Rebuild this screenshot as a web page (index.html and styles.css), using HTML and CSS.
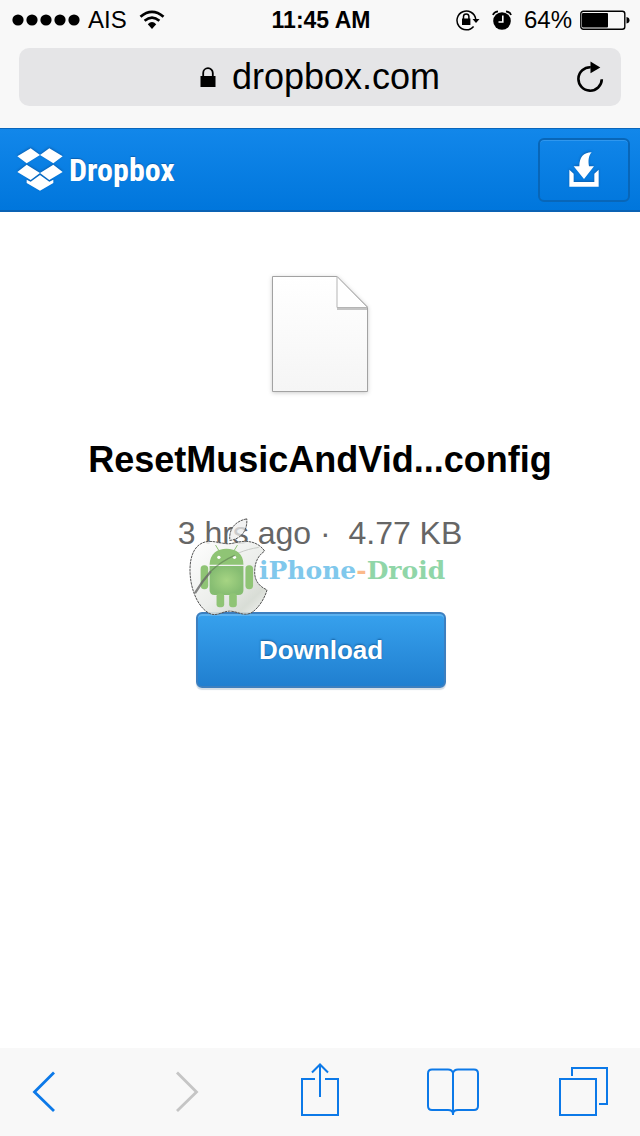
FILE: index.html
```html
<!DOCTYPE html>
<html lang="en">
<head>
  <meta charset="UTF-8">
  <meta name="viewport" content="width=device-width, initial-scale=1.0">
  <title>Dropbox - ResetMusicAndVid...config</title>
  <link rel="stylesheet" href="styles.css">
</head>
<body>

  <div class="browser-top">
    <div class="status-bar">
      <div class="status-left">
        <svg width="68" height="12" viewBox="0 0 68 12">
          <circle cx="6" cy="6" r="5.6"/>
          <circle cx="20" cy="6" r="5.6"/>
          <circle cx="34" cy="6" r="5.6"/>
          <circle cx="48" cy="6" r="5.6"/>
          <circle cx="62" cy="6" r="5.6"/>
        </svg>
        <span class="carrier">AIS</span>
        <svg width="26" height="20" viewBox="0 0 26 20">
          <path d="M1.5 6.7 Q13 -3 24.5 6.7" fill="none" stroke="#000" stroke-width="2.8"/>
          <path d="M5.6 10.8 Q13 4.4 20.4 10.8" fill="none" stroke="#000" stroke-width="2.6"/>
          <path d="M8.8 14.2 Q13 10 17.2 14.2 L13 19 Z"/>
        </svg>
      </div>
      <div class="time">11:45 AM</div>
      <div class="status-right">
        <svg width="24" height="22" viewBox="0 0 24 22">
          <path d="M17.6 17.5 A9.4 9.4 0 1 1 19.7 10" fill="none" stroke="#000" stroke-width="1.5"/>
          <path d="M16.5 10 H23.5 L20 14 Z"/>
          <rect x="6" y="9.5" width="8.4" height="6.5"/>
          <path d="M7.5 10 V7.6 A2.7 2.7 0 0 1 12.9 7.6 V10" fill="none" stroke="#000" stroke-width="1.5"/>
        </svg>
        <svg class="alarm" width="20" height="20" viewBox="0 0 20 20">
          <circle cx="10" cy="11" r="8.8"/>
          <path d="M1 5 Q1.8 2 6 1.3 M19 5 Q18.2 2 14 1.3" fill="none" stroke="#000" stroke-width="1.8"/>
          <path d="M10.8 5.5 V12 H6.5" fill="none" stroke="#fff" stroke-width="1.6"/>
        </svg>
        <span class="percent">64%</span>
        <svg width="50" height="20" viewBox="0 0 50 20">
          <rect x="0.8" y="1.2" width="44" height="18" rx="2.5" fill="none" stroke="#000" stroke-width="1.4"/>
          <rect x="2" y="3" width="26" height="14.5" rx="1"/>
          <path d="M46.5 7 Q49.5 7.5 49.5 10.3 Q49.5 13 46.5 13.5 Z"/>
        </svg>
      </div>
    </div>

    <div class="address-bar">
      <button class="address" type="button">
        <svg width="16" height="20" viewBox="0 0 16 20">
          <rect x="0.5" y="9" width="15" height="11"/>
          <path d="M3.2 10 V6 A4.8 4.8 0 0 1 12.8 6 V10" fill="none" stroke="#000" stroke-width="1.8"/>
        </svg>
        <span>dropbox.com</span>
      </button>
      <button class="reload" type="button" aria-label="Reload">
        <svg width="28" height="32" viewBox="0 0 28 32">
          <path d="M24.8 18.2 A11.7 11.7 0 1 1 13.8 6.3" fill="none" stroke="#000" stroke-width="2.6"/>
          <path d="M13.5 0.5 L23.3 6.6 L13.5 12.3 Z"/>
        </svg>
      </button>
    </div>
  </div>

  <header class="header">
    <a class="logo" href="#">
      <svg width="46" height="43" viewBox="51 82 138 129">
        <path d="M92 83 L120 103 L80 128 L52 107 Z M148 83 L188 107 L160 128 L120 103 Z M52 154 L80 132 L120 157 L92 178 Z M160 132 L188 154 L148 178 L120 157 Z M120 163 L148 183 L160 177 V187 L120 210 L80 187 V177 L92 183 Z"/>
      </svg>
      <span>Dropbox</span>
    </a>
    <button class="save" type="button" aria-label="Save to Dropbox">
      <svg width="30" height="35" viewBox="146 97 90 105">
        <path d="M147 150 L160 162 V187 H222 V162 L235 150 V201 H147 Z"/>
        <path d="M214 98 C190 98 177 112 177 140 H160 L191 178 L221 140 H206 C203 122 205 108 214 98 Z"/>
      </svg>
    </button>
  </header>

  <main class="file">
    <svg class="file-icon" width="104" height="124" viewBox="0 0 104 124">
      <defs>
        <linearGradient id="paper" x1="0" y1="0" x2="0" y2="1">
          <stop offset="0" stop-color="#fff"/>
          <stop offset="1" stop-color="#f5f5f5"/>
        </linearGradient>
      </defs>
      <path d="M4.5 4.5 H69 L99.5 35 V119.5 H4.5 Z" fill="url(#paper)" stroke="#a2a2a2"/>
      <path d="M69 36 H99 V38 H69 Z" fill="#c4c4c4"/>
      <path d="M69 4.5 V35.5 H99.5 Z" fill="#fff" stroke="#b5b5b5"/>
    </svg>
    <h1>ResetMusicAndVid...config</h1>
    <p class="info">3 hrs ago ·&nbsp; 4.77 KB</p>
    <button class="download" type="button">Download</button>

    <div class="watermark">
      <svg width="79" height="98" viewBox="58 54 238 294">
        <defs>
          <linearGradient id="glass" x1="0" y1="0" x2="1" y2="1">
            <stop offset="0" stop-color="#fff"/>
            <stop offset="0.55" stop-color="#e9ebe8"/>
            <stop offset="0.8" stop-color="#d3d8d0"/>
            <stop offset="1" stop-color="#f4f5f3"/>
          </linearGradient>
          <radialGradient id="robot">
            <stop offset="0" stop-color="#a6d483"/>
            <stop offset="1" stop-color="#86bd72"/>
          </radialGradient>
        </defs>
        <path d="M232 56 C200 62 177 84 181 121 C214 117 235 92 232 56 Z" fill="#eee" fill-opacity="0.75" stroke="#555" stroke-width="3" stroke-dasharray="8 2"/>
        <path d="M286 153 C274 136 256 125 232 124 C210 122 190 132 174 131 C154 130 138 123 116 124 C80 127 61 160 61 210 C61 270 88 330 125 343 C145 349 160 334 180 334 C204 334 220 350 244 340 C266 328 286 296 293 270 C266 258 254 238 256 211 C257 184 268 165 286 153 Z" fill="url(#glass)" fill-opacity="0.88" stroke="#555" stroke-width="3" stroke-dasharray="8 2"/>
        <path d="M158 186 C190 164 226 148 268 142" fill="none" stroke="#c8cbc7" stroke-width="3"/>
        <g fill="#8fc475">
          <path d="M120 194 C121 160 143 146 171 146 C199 146 222 160 222 194 Z"/>
          <path d="M120 198 H222 V270 Q222 285 207 285 H135 Q120 285 120 270 Z" fill="url(#robot)"/>
          <rect x="93" y="196" width="23" height="72" rx="11"/>
          <rect x="228" y="196" width="23" height="72" rx="11"/>
          <rect x="141" y="280" width="23" height="42" rx="9"/>
          <rect x="179" y="280" width="23" height="42" rx="9"/>
          <path d="M149 153 L138 135 M193 153 L204 135" stroke="#8fc475" stroke-width="3"/>
        </g>
        <circle cx="148" cy="172" r="5" fill="#fff"/>
        <circle cx="195" cy="172" r="5" fill="#fff"/>
        <path d="M76 280 C94 250 108 232 124 214" fill="none" stroke="#666" stroke-opacity="0.8" stroke-width="7"/>
        <path d="M124 214 C144 194 168 178 196 166" fill="none" stroke="#5b7a50" stroke-opacity="0.6" stroke-width="4"/>
      </svg>
      <span class="watermark-text"><span class="blue">iPhone</span><span class="orange">-</span><span class="green">Droid</span></span>
    </div>
  </main>

  <nav class="toolbar">
    <div class="toolbar-group history">
      <button type="button" aria-label="Back">
        <svg width="24" height="42" viewBox="0 0 24 42">
          <path d="M22 1.5 L2.5 21 L22 40" fill="none" stroke="currentColor" stroke-width="2.8"/>
        </svg>
      </button>
      <button type="button" aria-label="Forward" disabled>
        <svg width="24" height="42" viewBox="0 0 24 42">
          <path d="M2 1.5 L21.5 21 L2 40" fill="none" stroke="currentColor" stroke-width="2.8"/>
        </svg>
      </button>
    </div>
    <button type="button" aria-label="Share">
      <svg width="38" height="58" viewBox="0 0 38 58">
        <path d="M14 16 H1 V52 H37 V16 H24 M19 34 V2 M11 9.5 L19 1.5 L27 9.5" fill="none" stroke="currentColor" stroke-width="2"/>
      </svg>
    </button>
    <div class="toolbar-group">
      <button type="button" aria-label="Bookmarks">
        <svg width="52" height="48" viewBox="0 0 52 48">
          <path d="M26 47 V5 M26 5 Q25 1.5 21 1.5 H5 Q1 1.5 1 5.5 V38 Q1 42 5 42 H21 Q26 42 26 46 Q26 42 31 42 H47 Q51 42 51 38 V5.5 Q51 1.5 47 1.5 H31 Q27 1.5 26 5" fill="none" stroke="currentColor" stroke-width="2"/>
        </svg>
      </button>
      <button type="button" aria-label="Tabs">
        <svg width="49" height="50" viewBox="0 0 49 50">
          <path d="M1 12 H37 V48 H1 Z M13 9 V1 H48 V37 H40" fill="none" stroke="currentColor" stroke-width="2"/>
        </svg>
      </button>
    </div>
  </nav>

</body>
</html>
```
FILE: styles.css
```css
* {
  box-sizing: border-box;
}

body {
  font-family: 'Liberation Sans', Arial, sans-serif;
  background: #fff;
  color: #000;
  margin: 0;
  min-height: 100vh;
  display: flex;
  flex-direction: column;
}

button {
  font-family: inherit;
  border: none;
  background: none;
  padding: 0;
  color: inherit;
  cursor: pointer;
}

svg {
  display: block;
  flex-shrink: 0;
}

/* browser */
.browser-top {
  background: #f8f8f8;
  padding-bottom: 22px;
}

.status-bar {
  display: grid;
  grid-template-columns: 1fr auto 1fr;
  align-items: center;
  height: 40px;
  padding: 0 10px 0 12px;
  font-size: 24px;
}

.status-left,
.status-right {
  display: flex;
  align-items: center;
  gap: 8px;
}

.status-right {
  justify-content: flex-end;
}

.carrier {
  margin-right: 4px;
}

.alarm {
  margin: 0 4px;
}

.time {
  font-size: 23px;
  font-weight: bold;
}

.address-bar {
  display: grid;
  grid-template-columns: 1fr auto 1fr;
  align-items: center;
  height: 58px;
  margin: 8px 19px 0;
  padding: 0 16px;
  background: #e5e5e7;
  border-radius: 10px;
}

.address {
  grid-column: 2;
  display: flex;
  align-items: center;
  gap: 16px;
  font-size: 36px;
  line-height: 40px;
}

.reload {
  justify-self: end;
}

/* dropbox */
.header {
  display: flex;
  justify-content: space-between;
  align-items: center;
  height: 84px;
  padding: 0 10px 0 17px;
  background: linear-gradient(#1287ea, #0076dc);
  border-top: 1px solid #0a66bb;
  border-bottom: 2px solid #0a62b4;
}

.logo {
  display: flex;
  align-items: center;
  gap: 6px;
  color: #fff;
  font-family: 'Liberation Sans Narrow', 'Roboto Condensed', 'Open Sans Condensed', 'Liberation Sans', sans-serif;
  font-size: 32px;
  font-weight: bold;
  text-decoration: none;
  text-shadow: 0 -1px 1px #0a5fb0;
}

.logo svg,
.save svg {
  fill: #fff;
  filter: drop-shadow(0 -1px 1px #0a5fb0);
}

.save {
  display: flex;
  justify-content: center;
  align-items: center;
  width: 92px;
  height: 64px;
  border: 2px solid #0866b8;
  border-radius: 6px;
  box-shadow: inset 0 1px 0 #2f97ee;
}

.file {
  flex: 1;
  display: flex;
  flex-direction: column;
  align-items: center;
  position: relative;
  padding-top: 60px;
}

.file-icon {
  filter: drop-shadow(0 1px 2px #ccc);
}

h1 {
  font-size: 36px;
  line-height: 40px;
  margin: 44px 0 0;
}

.info {
  font-size: 32px;
  line-height: 40px;
  color: #666;
  margin: 33px 0 0;
}

.download {
  width: 250px;
  height: 76px;
  margin: 59px 0 0 2px;
  border: 2px solid #3d7fbf;
  border-radius: 6px;
  background: linear-gradient(#37a1ed, #207fd0);
  box-shadow: inset 0 2px 0 #5bb2f0, 0 2px 1px #d5dde5;
  color: #fff;
  font-size: 26px;
  font-weight: bold;
  text-shadow: 0 -1px 2px #17609f;
}

.watermark {
  position: absolute;
  top: 306px;
  left: calc(50% - 131px);
  display: flex;
  align-items: center;
  pointer-events: none;
}

.watermark-text {
  margin-left: -9px;
  padding-top: 6px;
  font-family: 'DejaVu Serif', serif;
  font-size: 25px;
  font-weight: bold;
}

.blue {
  color: #80c8ec;
}

.orange {
  color: #fbb98a;
}

.green {
  color: #90d6a8;
}

.toolbar {
  display: grid;
  grid-template-columns: 1fr auto 1fr;
  column-gap: 88px;
  align-items: center;
  height: 88px;
  padding: 0 32px;
  background: #f8f8f8;
  color: #0c79e8;
}

.toolbar-group {
  display: flex;
  justify-content: space-between;
  align-items: center;
}

.history {
  padding-right: 14px;
}

.toolbar button:disabled {
  color: #c5c5c5;
}
```
